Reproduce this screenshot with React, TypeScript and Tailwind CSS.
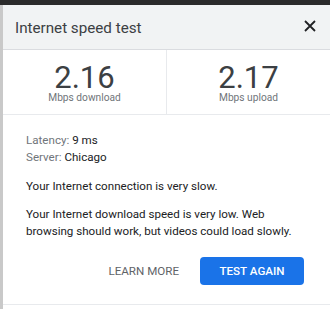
import React from "react";

const font = { fontFamily: "Roboto, 'Liberation Sans', sans-serif" };

const Stat: React.FC<{ value: string; label: string }> = ({ value, label }) => (
    <div className="flex-1 flex flex-col items-center pt-[13px]">
        <div className="text-[31px] leading-[29px] text-[#3c4043]">{value}</div>
        <div className="text-[10.2px] leading-[12px] text-[#70757a]">{label}</div>
    </div>
);

export default function App() {
    return (
        <div className="w-[330px] h-[309px] bg-white flex flex-col overflow-hidden" style={font}>
            <div className="h-[5px] bg-[#2b2b2b]" />
            <div className="flex flex-1">
                <div className="w-[3px] bg-[#c9c9c9]" />
                <div className="flex-1 flex flex-col">
                    <div className="h-[45px] bg-[#f1f3f4] border-b border-[#dadce0] flex items-center justify-between pl-[12px] pr-[14px]">
                        <span className="text-[15.2px] text-[#3c4043] pt-[2px]">Internet speed test</span>
                        <svg width="12" height="12" viewBox="0 0 12 12" className="mb-[2px]">
                            <path d="M1 1 L11 11 M11 1 L1 11" stroke="#202124" strokeWidth="1.8" />
                        </svg>
                    </div>
                    <div className="flex h-[65px] border-b border-[#e8eaed]">
                        <Stat value="2.16" label="Mbps download" />
                        <div className="w-px bg-[#e8eaed]" />
                        <Stat value="2.17" label="Mbps upload" />
                    </div>
                    <div className="pl-[23px] pr-[12px] pt-[17px] text-[11.6px] leading-[17px] text-[#202124]">
                        <div><span className="text-[#70757a]">Latency:</span> 9 ms</div>
                        <div><span className="text-[#70757a]">Server:</span> Chicago</div>
                        <p className="mt-[12px]">Your Internet connection is very slow.</p>
                        <p className="mt-[11px] max-w-[272px]">Your Internet download speed is very low. Web browsing should work, but videos could load slowly.</p>
                        <div className="flex justify-end items-center gap-[21px] mt-[17px] pr-[14px]">
                            <span className="text-[11.6px] text-[#5f6368]">LEARN MORE</span>
                            <button className="w-[104px] h-[28px] rounded-[4px] bg-[#1a73e8] text-white text-[11.6px] font-medium">TEST AGAIN</button>
                        </div>
                    </div>
                    <div className="mt-auto mb-[4px] border-b border-[#e8eaed]" />
                </div>
            </div>
        </div>
    );
}
